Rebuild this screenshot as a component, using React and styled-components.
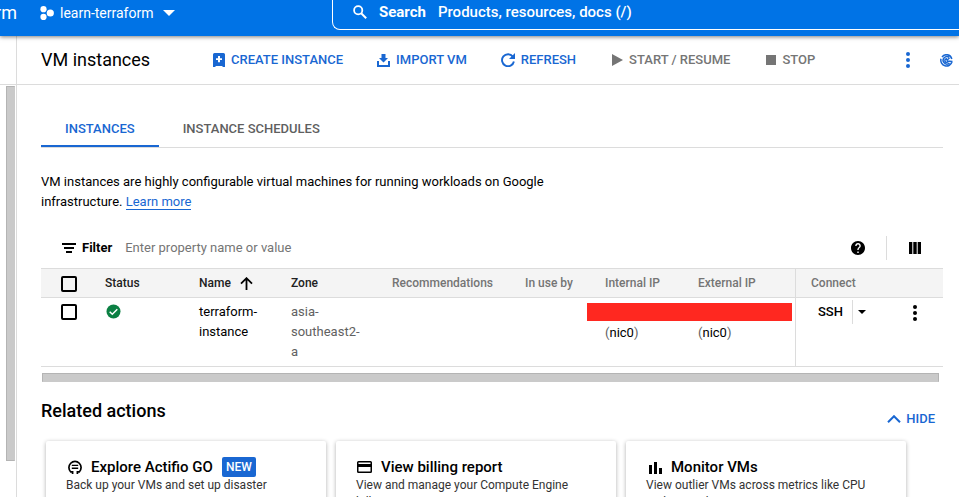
import React from "react";
import styled, { createGlobalStyle } from "styled-components";

const BLUE = "#1967d2";
const LINE = "#dcdcdc";

const GlobalStyle = createGlobalStyle`
  *, *::before, *::after { box-sizing: border-box; }
  body { margin: 0; background: #fff; color: #000; font: 13px/20px Roboto, Arial, sans-serif; }
  button, input { font: inherit; color: inherit; }
  h1, h2, h3, p { margin: 0; }
`;

const Page = styled.div`
  display: flex;
  flex-direction: column;
  height: 100vh;
  overflow: hidden;
`;

const PlainButton = styled.button`
  display: flex;
  align-items: center;
  padding: 0;
  border: 0;
  background: none;
  cursor: pointer;
  white-space: nowrap;
`;

const Icon = styled.svg`
  display: block;
  flex: none;
  width: ${(p) => p.$w || 16}px;
  height: ${(p) => p.$h || p.$w || 16}px;
  fill: currentColor;
`;

const TopBar = styled.header`
  display: flex;
  flex: none;
  height: 36px;
  background: #0073e6;
  color: #fff;
  position: relative;
  box-shadow: 0 1px 4px rgba(0, 0, 0, 0.5);
`;

const Brand = styled.div`
  display: flex;
  justify-content: flex-end;
  width: 17px;
  overflow: hidden;
  font-size: 18px;
  line-height: 26px;
`;

const ProjectButton = styled(PlainButton)`
  height: 26px;
  margin-left: 23px;
  width: 292px;
  font-size: 14px;
  gap: 6px;
  svg:last-child { margin-left: 3px; }
`;

const SearchBox = styled.label`
  display: flex;
  flex: 1;
  gap: 12px;
  height: 30px;
  padding: 0 0 5px 20px;
  align-items: center;
  border: solid #fff;
  border-width: 0 0 1px 1px;
  border-radius: 0 0 0 8px;
  font-size: 15px;
  font-weight: 700;
`;

const SearchInput = styled.input`
  flex: 1;
  min-width: 0;
  padding: 0;
  border: 0;
  outline: 0;
  background: none;
  font-weight: 500;
  &::placeholder { color: #fff; opacity: 1; }
`;

const Body = styled.div`
  display: flex;
  flex: 1;
  min-height: 0;
`;

const Rail = styled.aside`
  flex: none;
  width: 17px;
  border-right: 1px solid ${LINE};
`;

const RailHead = styled.div`
  height: 49px;
  border-bottom: 1px solid ${LINE};
`;

const RailThumb = styled.div`
  height: calc(100% - 86px);
  margin: 1px 1px 0 6px;
  background: #cacaca;
  border: 1px solid #b4b4b4;
  border-right-color: #cacaca;
`;

const Main = styled.main`
  flex: 1;
  min-width: 0;
`;

const Toolbar = styled.div`
  display: flex;
  align-items: center;
  height: 49px;
  padding: 0 6px 0 24px;
  border-bottom: 1px solid ${LINE};
`;

const Title = styled.h1`
  width: 172px;
  font-size: 18px;
  line-height: 24px;
  font-weight: 400;
`;

const Actions = styled.div`
  display: flex;
  gap: 34px;
`;

const Action = styled(PlainButton)`
  gap: 6px;
  color: ${(p) => (p.disabled ? "#757575" : BLUE)};
  font-weight: 500;
`;

const ToolbarEnd = styled.div`
  display: flex;
  align-items: center;
  gap: 30px;
  margin-left: auto;
  color: ${BLUE};
`;

const Content = styled.div`
  padding: 24px 16px 0 24px;
`;

const Tabs = styled.div`
  display: flex;
  height: 39px;
  border-bottom: 1px solid ${LINE};
`;

const Tab = styled(PlainButton)`
  height: 38px;
  padding: 3px 24px 0;
  border-bottom: 2px solid ${(p) => (p.$active ? BLUE : "transparent")};
  color: ${(p) => (p.$active ? BLUE : "#5f5f5f")};
  font-weight: 500;
`;

const Intro = styled.p`
  max-width: 520px;
  margin-top: 24px;
`;

const Link = styled.a`
  color: ${BLUE};
  text-decoration: none;
  border-bottom: 1px solid ${BLUE};
`;

const FilterBar = styled.div`
  display: flex;
  align-items: center;
  height: 40px;
  margin-top: 16px;
  padding: 0 22px 0 21px;
`;

const FilterLabel = styled.label`
  display: flex;
  align-items: center;
  gap: 6px;
  font-weight: 700;
`;

const FilterInput = styled.input`
  flex: 1;
  min-width: 0;
  padding: 0;
  margin-left: 13px;
  border: 0;
  outline: 0;
  background: none;
  &::placeholder { color: #757575; opacity: 1; }
`;

const FilterTools = styled.div`
  display: flex;
  align-items: center;
`;

const Separator = styled.span`
  width: 1px;
  height: 24px;
  margin: 0 22px 0 21px;
  background: ${LINE};
`;

const Table = styled.table`
  width: 100%;
  table-layout: fixed;
  border-collapse: separate;
  border-spacing: 0;
`;

const Col = styled.col`
  width: ${(p) => (p.$w ? p.$w + "px" : "auto")};
`;

const Th = styled.th`
  height: 30px;
  padding: 0 0 0 18px;
  background: #f4f4f4;
  border: solid ${LINE};
  border-width: 1px 0 1px ${(p) => (p.$split ? "1px" : "0")};
  color: ${(p) => (p.$muted ? "#757575" : "#212121")};
  font-size: 12px;
  font-weight: 500;
  text-align: left;
  white-space: nowrap;
  ${(p) => p.$split && "padding-left: 15px;"}
`;

const Td = styled.td`
  padding: 4px ${(p) => (p.$flush ? 0 : 12)}px 4px 18px;
  vertical-align: top;
  border: solid ${LINE};
  border-width: 0 0 1px ${(p) => (p.$split ? "1px" : "0")};
  color: ${(p) => (p.$muted ? "#616161" : "#000")};
`;

const SortButton = styled(PlainButton)`
  gap: 9px;
  font-weight: 500;
`;

const Checkbox = styled.input`
  display: block;
  appearance: none;
  width: 16px;
  height: 16px;
  margin: ${(p) => (p.$row ? 2 : 1)}px 0 0 2px;
  border: 2px solid #000;
  border-radius: 2px;
`;

const StatusIcon = styled(Icon)`
  margin: 2px 0 0 1px;
  color: #0b8043;
`;

const Redacted = styled.div`
  height: 18px;
  margin: 1px ${(p) => (p.$end ? 3 : 0)}px 2px -18px;
  background: #ff2820;
`;

const Nic = styled.span`
  color: #616161;
  span { color: #000; }
`;

const ConnectCell = styled.div`
  display: flex;
  align-items: center;
  height: 24px;
  margin-top: -2px;
  padding-left: 4px;
`;

const SshButton = styled(PlainButton)`
  font-weight: 500;
`;

const SshMenu = styled(PlainButton)`
  height: 24px;
  margin-left: 9px;
  padding-left: 5px;
  border-left: 1px solid ${LINE};
`;

const RowMenu = styled(PlainButton)`
  margin: 2px 26px 0 auto;
`;

const HScroll = styled.div`
  height: 9px;
  margin: 6px 4px 0 1px;
  background: #cacaca;
  border: 1px solid #b4b4b4;
  border-bottom-color: #cacaca;
`;

const RelatedHead = styled.div`
  display: flex;
  justify-content: space-between;
  height: 59px;
  padding: 17px 8px 0 0;
`;

const RelatedTitle = styled.h2`
  font-size: 18px;
  line-height: 24px;
  font-weight: 500;
`;

const HideButton = styled(PlainButton)`
  height: 20px;
  margin-top: 10px;
  gap: 5px;
  color: ${BLUE};
  font-weight: 500;
`;

const Cards = styled.div`
  display: flex;
  gap: 10px;
  padding-left: 5px;
`;

const Card = styled.article`
  width: 280px;
  padding: 15px 20px 24px;
  background: #fff;
  border-radius: 2px;
  box-shadow: 0 1px 4px rgba(0, 0, 0, 0.32);
`;

const CardHead = styled.div`
  display: flex;
  align-items: center;
  gap: 9px;
  height: 21px;
`;

const CardTitle = styled.h3`
  font-size: 15px;
  line-height: 20px;
  font-weight: 500;
`;

const Badge = styled.span`
  height: 20px;
  padding: 0 4px;
  border-radius: 2px;
  background: ${BLUE};
  color: #fff;
  font-size: 12px;
  font-weight: 500;
`;

const CardText = styled.p`
  font-size: 12px;
  line-height: 17px;
  color: #333;
`;

const MoreVert = () => (
  <Icon $w={4} $h={16} viewBox="0 0 4 16" aria-hidden="true">
    <circle cx="2" cy="2" r="2" /><circle cx="2" cy="8" r="2" /><circle cx="2" cy="14" r="2" />
  </Icon>
);

const Caret = ({ w, h }) => (
  <Icon $w={w} $h={h} viewBox="0 0 12 6" preserveAspectRatio="none" aria-hidden="true">
    <path d="M0 0h12L6 6z" />
  </Icon>
);

const COLUMNS = [46, 94, 92, 101, 133, 80, 93, 115, 0];

const CARDS = [
  {
    title: "Explore Actifio GO",
    badge: "NEW",
    text: "Back up your VMs and set up disaster recovery",
    icon: (
      <Icon viewBox="0 0 16 16" aria-hidden="true">
        <path d="M6.6 15V12.900H4.700A6.100 6.100 0 1 1 13.300 12.900H11.400V15" fill="none" stroke="currentColor" strokeWidth="1.700" />
        <path d="M5.800 5.800h6.400v1.300H5.800zM5.800 8.600h6.400v1.300H5.800z" />
      </Icon>
    ),
  },
  {
    title: "View billing report",
    text: "View and manage your Compute Engine billing usage",
    icon: (
      <Icon viewBox="0 0 16 16" aria-hidden="true">
        <path fillRule="evenodd" d="M2.500 2h12A1.500 1.500 0 0 1 16 3.500v9a1.500 1.500 0 0 1-1.500 1.500h-12A1.500 1.500 0 0 1 1 12.500v-9A1.500 1.500 0 0 1 2.500 2zM2.500 3.400V5h12V3.400zM2.500 8v4.600h12V8z" />
      </Icon>
    ),
  },
  {
    title: "Monitor VMs",
    text: "View outlier VMs across metrics like CPU and network",
    icon: (
      <Icon viewBox="0 0 16 16" aria-hidden="true">
        <path d="M3 6h3v9H3zM8 3h3v12H8zM13 9h3v6h-3z" />
      </Icon>
    ),
  },
];

export default function App() {
  return (
    <Page>
      <GlobalStyle />
      <TopBar>
        <Brand>rm</Brand>
        <ProjectButton>
          <Icon $w={14} viewBox="0 0 14 14" aria-hidden="true">
            <circle cx="3.5" cy="3.2" r="3.1" /><circle cx="3.5" cy="10.9" r="3.1" /><circle cx="10.3" cy="7" r="3.6" />
          </Icon>
          learn-terraform
          <Caret w={12} h={6} />
        </ProjectButton>
        <SearchBox>
          <Icon $w={14} viewBox="0 0 14 14" aria-hidden="true">
            <circle cx="5.2" cy="5.2" r="4.1" fill="none" stroke="currentColor" strokeWidth="1.8" />
            <path d="M8.2 8.2l5 5" stroke="currentColor" strokeWidth="2" />
          </Icon>
          Search
          <SearchInput type="search" placeholder="Products, resources, docs (/)" />
        </SearchBox>
      </TopBar>

      <Body>
        <Rail>
          <RailHead />
          <RailThumb />
        </Rail>
        <Main>
          <Toolbar>
            <Title>VM instances</Title>
            <Actions>
              <Action>
                <Icon $w={12} $h={14} viewBox="0 0 12 14" aria-hidden="true">
                  <path fillRule="evenodd" d="M1.5 0h9A1.5 1.5 0 0 1 12 1.5V14h-2.500v-1h-7v1H0V1.500A1.500 1.500 0 0 1 1.500 0zM5 3v2.200H3v1.800h2v2.200h2V7h2V5.200H7V3z" />
                </Icon>
                CREATE INSTANCE
              </Action>
              <Action>
                <Icon $w={13} viewBox="0 0 13 13" aria-hidden="true">
                  <path d="M4.500 0h4v4H11L6.500 8.500 2 4h2.500zM0 7h2v4h9V7h2v6H0z" />
                </Icon>
                IMPORT VM
              </Action>
              <Action>
                <Icon $w={14} viewBox="0 0 14 14" aria-hidden="true">
                  <path d="M11.800 3.600A6 6 0 1 0 12.900 8.500" fill="none" stroke="currentColor" strokeWidth="1.900" />
                  <path d="M14 0v6H8z" />
                </Icon>
                REFRESH
              </Action>
              <Action disabled>
                <Icon $w={13} $h={12} viewBox="0 0 13 12" aria-hidden="true"><path d="M2 0l11 6-11 6z" /></Icon>
                START / RESUME
              </Action>
              <Action disabled>
                <Icon $w={12} $h={10} viewBox="0 0 12 10" aria-hidden="true"><path d="M2 0h10v10H2z" /></Icon>
                STOP
              </Action>
            </Actions>
            <ToolbarEnd>
              <PlainButton aria-label="More actions"><MoreVert /></PlainButton>
              <PlainButton aria-label="Operations">
                <Icon $w={13} viewBox="0 0 13 13" aria-hidden="true">
                  <path d="M11.800 5A5.500 5.500 0 0 0 2 3M1 4.800a5.600 5.600 0 0 0 11 3M9.300 3.500A3.700 3.700 0 1 0 9.500 9M6.500 6.500L9.500 4M8.500 6.500a1.800 1.800 0 1 1-1.500-1.700M7 7l5.500.5" fill="none" stroke="currentColor" strokeWidth="1.500" />
                </Icon>
              </PlainButton>
            </ToolbarEnd>
          </Toolbar>

          <Content>
            <Tabs role="tablist">
              <Tab role="tab" aria-selected="true" $active>INSTANCES</Tab>
              <Tab role="tab" aria-selected="false">INSTANCE SCHEDULES</Tab>
            </Tabs>
            <Intro>
              VM instances are highly configurable virtual machines for running workloads on Google
              infrastructure. <Link href="#learn">Learn more</Link>
            </Intro>

            <FilterBar>
              <FilterLabel htmlFor="filter">
                <Icon $w={14} $h={10} viewBox="0 0 14 10" aria-hidden="true">
                  <path d="M0 0h14v2H0zM2 4h10v2H2zM4 8h6v2H4z" />
                </Icon>
                Filter
              </FilterLabel>
              <FilterInput id="filter" placeholder="Enter property name or value" />
              <FilterTools>
                <PlainButton aria-label="Help">
                  <Icon $w={14} viewBox="2 2 20 20" aria-hidden="true">
                    <path d="M12 2C6.480 2 2 6.480 2 12s4.480 10 10 10 10-4.480 10-10S17.520 2 12 2zm1 17h-2v-2h2v2zm2.070-7.750l-.9.920C13.450 12.900 13 13.500 13 15h-2v-.5c0-1.100.450-2.100 1.170-2.830l1.240-1.260c.370-.360.590-.860.590-1.410 0-1.100-.9-2-2-2s-2 .9-2 2H8c0-2.210 1.790-4 4-4s4 1.790 4 4c0 .880-.360 1.680-.930 2.250z" />
                  </Icon>
                </PlainButton>
                <Separator />
                <PlainButton aria-label="Column display options">
                  <Icon $w={12} viewBox="0 0 12 12" aria-hidden="true">
                    <path d="M0 0h3.300v12H0zM4.300 0h3.400v12H4.300zM8.700 0H12v12H8.700z" />
                  </Icon>
                </PlainButton>
              </FilterTools>
            </FilterBar>

            <Table>
              <colgroup>
                {COLUMNS.map((w, i) => <Col key={i} $w={w} />)}
              </colgroup>
              <thead>
                <tr>
                  <Th><Checkbox type="checkbox" aria-label="Select all instances" /></Th>
                  <Th>Status</Th>
                  <Th aria-sort="ascending">
                    <SortButton>
                      Name
                      <Icon $w={13} viewBox="0 0 13 13" aria-hidden="true">
                        <path d="M6.500 13V1.200M1 6.700l5.500-5.500L12 6.700" fill="none" stroke="#000" strokeWidth="1.800" />
                      </Icon>
                    </SortButton>
                  </Th>
                  <Th>Zone</Th>
                  <Th $muted>Recommendations</Th>
                  <Th $muted>In use by</Th>
                  <Th $muted>Internal IP</Th>
                  <Th $muted>External IP</Th>
                  <Th $muted $split>Connect</Th>
                </tr>
              </thead>
              <tbody>
                <tr>
                  <Td $flush><Checkbox $row type="checkbox" aria-label="Select terraform-instance" /></Td>
                  <Td>
                    <StatusIcon $w={15} viewBox="0 0 15 15" role="img" aria-label="Running">
                      <circle cx="7.500" cy="7.500" r="7" />
                      <path d="M3.700 7.800l2.600 2.500 5-5" fill="none" stroke="#fff" strokeWidth="1.500" />
                    </StatusIcon>
                  </Td>
                  <Td>terraform-instance</Td>
                  <Td $muted>asia-southeast2-a</Td>
                  <Td />
                  <Td />
                  <Td $flush><Redacted /><Nic>(<span>nic0</span>)</Nic></Td>
                  <Td $flush><Redacted $end /><Nic>(<span>nic0</span>)</Nic></Td>
                  <Td $flush $split>
                    <ConnectCell>
                      <SshButton>SSH</SshButton>
                      <SshMenu aria-label="SSH options"><Caret w={8} h={4} /></SshMenu>
                      <RowMenu aria-label="Instance actions"><MoreVert /></RowMenu>
                    </ConnectCell>
                  </Td>
                </tr>
              </tbody>
            </Table>
            <HScroll />

            <RelatedHead>
              <RelatedTitle>Related actions</RelatedTitle>
              <HideButton>
                <Icon $w={14} $h={8} viewBox="0 0 14 8" aria-hidden="true">
                  <path d="M1 7.200l6-6 6 6" fill="none" stroke="currentColor" strokeWidth="2" />
                </Icon>
                HIDE
              </HideButton>
            </RelatedHead>
            <Cards>
              {CARDS.map((card) => (
                <Card key={card.title}>
                  <CardHead>
                    {card.icon}
                    <CardTitle>{card.title}</CardTitle>
                    {card.badge && <Badge>{card.badge}</Badge>}
                  </CardHead>
                  <CardText>{card.text}</CardText>
                </Card>
              ))}
            </Cards>
          </Content>
        </Main>
      </Body>
    </Page>
  );
}
